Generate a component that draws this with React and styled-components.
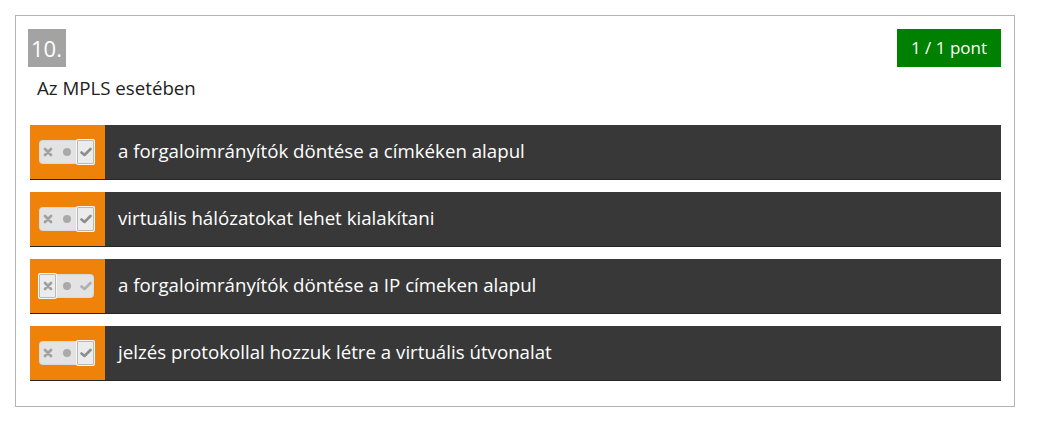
import React from "react";
import styled, { createGlobalStyle } from "styled-components";

const Global = createGlobalStyle`
  html, body { margin: 0; padding: 0; background: #fff; }
  body { font-family: "Open Sans", "Liberation Sans", sans-serif; }
`;

const Card = styled.div`
  margin: 15px 0 0 15px;
  width: 1000px;
  box-sizing: border-box;
  border: 1px solid #b4b4b4;
  padding: 13px 13px 25px 12px;
`;

const Header = styled.div`
  display: flex;
  justify-content: space-between;
  align-items: flex-start;
`;

const Num = styled.div`
  width: 38px;
  height: 38px;
  background: #a3a3a3;
  color: #fff;
  font-size: 22px;
  line-height: 38px;
  text-align: center;
  box-sizing: border-box;
  padding-right: 1px;
`;

const Score = styled.div`
  height: 38px;
  width: 104px;
  background: #008000;
  color: #fff;
  font-size: 17px;
  line-height: 38px;
  text-align: center;
`;

const Question = styled.div`
  margin: 9px 0 0 9px;
  font-size: 18.7px;
  line-height: 24px;
  color: #222;
`;

const List = styled.div`
  margin: 25px 0 0 2px;
  display: flex;
  flex-direction: column;
  gap: 12px;
`;

const Row = styled.div`
  display: flex;
  height: 55px;
  box-sizing: border-box;
  border-bottom: 1px solid #262626;
  background: #383838;
`;

const Side = styled.div`
  width: 75px;
  flex: none;
  background: #ef8209;
  display: flex;
  align-items: center;
  padding-left: 9px;
  box-sizing: border-box;
`;

const Toggle = styled.div`
  width: 55px;
  height: 24px;
  border-radius: 4px;
  background: #e3e3e3;
  display: flex;
  align-items: stretch;
  box-shadow: inset 0 0 2px rgba(0,0,0,0.15);
`;

const Seg = styled.div`
  width: ${p => (p.$mid ? 21 : 17)}px;
  flex: none;
  display: flex;
  align-items: center;
  justify-content: center;
  box-sizing: border-box;
  border: ${p => (p.$on ? "1.5px solid #b9b9b9" : "none")};
  background: ${p => (p.$on ? "#ececec" : "transparent")};
  box-shadow: ${p => (p.$on ? "0 0 0 1px #f6f6f6" : "none")};
  border-radius: ${p => (p.$on ? "1px" : "0")};
`;

const Label = styled.div`
  color: #fff;
  font-size: 18.7px;
  display: flex;
  align-items: center;
  padding: 0 0 4px 13px;
`;

const XIcon = () => (
  <svg width="10" height="10" viewBox="0 0 10 10">
    <path d="M2 2 L8 8 M8 2 L2 8" stroke="#a0a0a0" strokeWidth="2.8" strokeLinecap="round" />
  </svg>
);
const Dot = () => (
  <svg width="10" height="10" viewBox="0 0 10 10">
    <circle cx="5" cy="5" r="4" fill="#a9a9a9" />
  </svg>
);
const Check = ({ dark }) => (
  <svg width="12" height="10" viewBox="0 0 12 10">
    <path d="M1.5 5.5 L4.5 8 L10.5 2" fill="none" stroke={dark ? "#8e8e8e" : "#b0b0b0"} strokeWidth="2.6" strokeLinecap="round" strokeLinejoin="round" />
  </svg>
);

const answers = [
  { text: "a forgaloimrányítók döntése a címkéken alapul", v: "yes" },
  { text: "virtuális hálózatokat lehet kialakítani", v: "yes" },
  { text: "a forgaloimrányítók döntése a IP címeken alapul", v: "no" },
  { text: "jelzés protokollal hozzuk létre a virtuális útvonalat", v: "yes" },
];

export default function App() {
  return (
    <>
      <Global />
      <Card>
        <Header>
          <Num>10.</Num>
          <Score>1 / 1 pont</Score>
        </Header>
        <Question>Az MPLS esetében</Question>
        <List>
          {answers.map((a, i) => (
            <Row key={i}>
              <Side>
                <Toggle>
                  <Seg $on={a.v === "no"}><XIcon /></Seg>
                  <Seg $mid><Dot /></Seg>
                  <Seg $on={a.v === "yes"}><Check dark={a.v === "yes"} /></Seg>
                </Toggle>
              </Side>
              <Label>{a.text}</Label>
            </Row>
          ))}
        </List>
      </Card>
    </>
  );
}
